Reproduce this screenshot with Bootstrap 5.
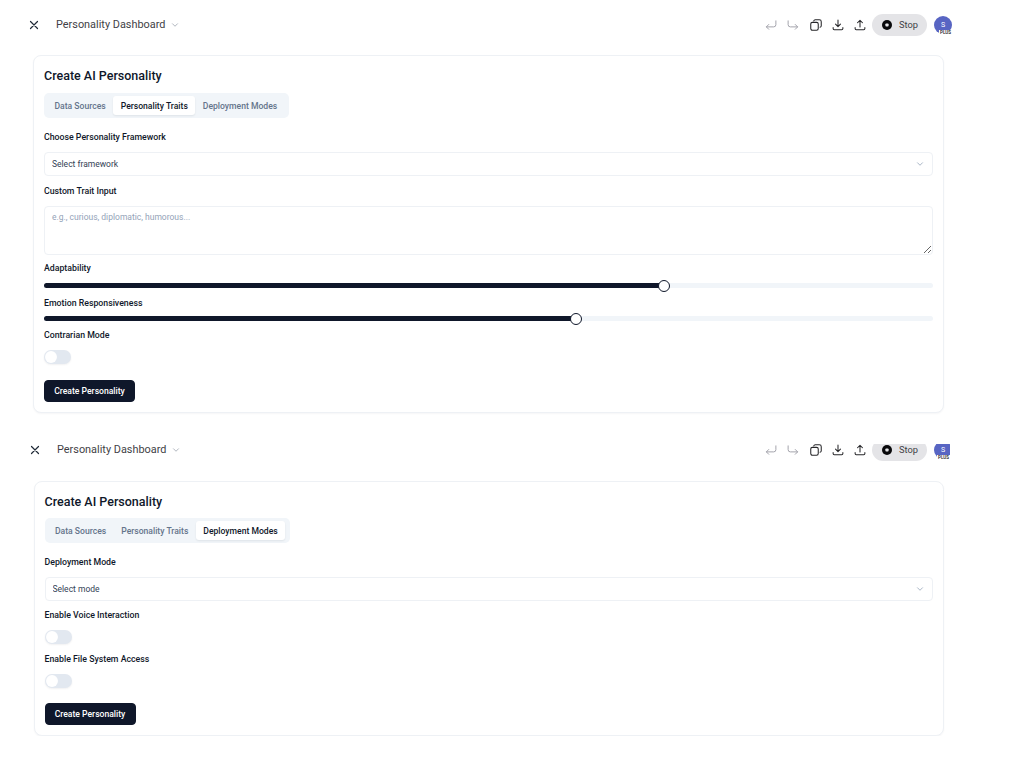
<!DOCTYPE html>
<html lang="en">
  <head>
    <meta charset="UTF-8" />
    <meta name="viewport" content="width=device-width, initial-scale=1.0" />
    <title>Personality Dashboard</title>
    <link href="https://cdn.jsdelivr.net/npm/bootstrap@5.3.3/dist/css/bootstrap.min.css" rel="stylesheet" />
    <style>
      body {
        font-family: Roboto, "Liberation Sans", sans-serif;
        background-color: #fff;
        color: #0f172a;
        padding-top: 14px;
      }
      .sheet {
        width: 952px;
      }
      .sheet-second {
        width: 950px;
        margin-top: 26px;
      }
      .page-head {
        height: 22px;
        padding-left: 29px;
      }
      .sheet-second .page-head {
        padding-left: 30px;
      }
      .close-icon {
        width: 10px;
        height: 10px;
        margin-right: 17px;
        color: #1f2937;
      }
      .page-name {
        font-size: 10.9px;
        color: #3f3f46;
      }
      .name-chevron {
        width: 8px;
        height: 8px;
        margin-left: 6px;
        color: #9ca3af;
      }
      .head-tools {
        width: 192px;
        height: 22px;
        overflow: hidden;
      }
      .sheet-second .head-tools {
        width: 190px;
        height: 17px;
        align-self: flex-end;
      }
      .tool-slot {
        flex: none;
        width: 22px;
        height: 22px;
        color: #27272a;
      }
      .tool-slot svg {
        width: 12px;
        height: 12px;
      }
      .tool-gap {
        margin-left: 1px;
      }
      .tool-muted {
        color: #a1a1aa;
      }
      .stop-pill {
        flex: none;
        width: 55px;
        height: 22px;
        margin-left: 1px;
        background-color: #e4e4e7;
        border-radius: 11px;
        font-size: 9.3px;
        color: #3f3f46;
      }
      .stop-dot {
        width: 10px;
        height: 10px;
        margin-left: 10px;
        margin-right: 7px;
      }
      .avatar-slot {
        flex: none;
        width: 18px;
        height: 22px;
        margin-left: 7px;
      }
      .avatar-disc {
        top: 2px;
        left: 0;
        width: 18px;
        height: 18px;
        background-color: #5865c3;
        color: #fff;
        font-size: 7px;
      }
      .plus-tag {
        top: 16px;
        right: 0;
        padding: 0 1px;
        background-color: #fff;
        font-size: 4.5px;
        line-height: 5px;
        font-weight: 600;
        color: #27272a;
      }
      .sheet-second .plus-tag {
        right: 2px;
      }
      .maker-card {
        width: 911px;
        margin-top: 19px;
        margin-left: 33px;
        padding: 10px;
        border: 1px solid #eef1f5;
        border-radius: 8px;
        box-shadow: 0 1px 2px rgba(15, 23, 42, 0.04);
        color: #0f172a;
      }
      .sheet-first .maker-card {
        height: 358px;
      }
      .sheet-second .maker-card {
        height: 255px;
        margin-top: 20px;
        margin-left: 33.5px;
        width: 910.5px;
      }
      .maker-title {
        font-size: 12.5px;
        font-weight: 500;
        line-height: 20px;
        margin-bottom: 7px;
      }
      .sheet-second .maker-title {
        margin-bottom: 6px;
      }
      .trait-tabs {
        width: 245px;
        height: 25px;
        padding: 3px;
        background-color: #f1f5f9;
        border-radius: 5px;
        flex-wrap: nowrap;
      }
      .trait-tabs .nav-link {
        flex: none;
        padding: 0 7.5px;
        height: 19px;
        line-height: 20px;
        border-radius: 3px;
        font-size: 8.6px;
        font-weight: 500;
        color: #64748b;
        white-space: nowrap;
      }
      .trait-tabs .nav-link.active {
        background-color: #fff;
        color: #0f172a;
        box-shadow: 0 1px 2px rgba(15, 23, 42, 0.08);
      }
      .field-name {
        display: block;
        margin: 0;
        font-size: 8.75px;
        font-weight: 500;
        line-height: 14px;
        color: #0f172a;
      }
      .pick-box {
        --bs-form-select-bg-img: url("data:image/svg+xml,%3csvg xmlns='http://www.w3.org/2000/svg' viewBox='0 0 16 16'%3e%3cpath fill='none' stroke='%2394a3b8' stroke-linecap='round' stroke-linejoin='round' stroke-width='1.6' d='M3 5.5l5 5 5-5'/%3e%3c/svg%3e");
        height: 25px;
        min-height: 0;
        padding: 0 24px 0 7px;
        border: 1px solid #eef1f5;
        border-radius: 4px;
        background-position: right 8px center;
        background-size: 8px 8px;
        font-size: 8.5px;
        line-height: 23px;
        color: #334155;
      }
      .trait-text {
        height: 50px;
        min-height: 0;
        padding: 4px 7px;
        border: 1px solid #eef1f5;
        border-radius: 4px;
        font-size: 8.5px;
        color: #334155;
      }
      .trait-text::placeholder {
        color: #94a3b8;
      }
      .level-wrap {
        height: 5px;
      }
      .level-bar {
        --bs-progress-height: 5px;
        --bs-progress-bg: #f1f5f9;
        --bs-progress-bar-bg: #0f172a;
        --bs-progress-border-radius: 3px;
      }
      .level-thumb {
        top: -3.5px;
        width: 12px;
        height: 12px;
        margin-left: -6px;
        background-color: #fff;
        border: 1.75px solid #0f172a;
        border-radius: 50%;
      }
      .soft-switch {
        min-height: 0;
        margin: 0;
        padding: 0;
        line-height: 0;
      }
      .soft-switch .form-check-input {
        --bs-form-switch-bg: url("data:image/svg+xml,%3csvg xmlns='http://www.w3.org/2000/svg' viewBox='-4 -4 8 8'%3e%3ccircle r='3.4' fill='%23fff'/%3e%3c/svg%3e");
        float: none;
        width: 27px;
        height: 14px;
        margin: 0;
        border: 0;
        background-color: #e2e8f0;
        box-shadow: 0 1px 2px rgba(15, 23, 42, 0.06);
      }
      .make-btn {
        width: 91px;
        height: 22px;
        padding: 1px 0 0;
        background-color: #0f172a;
        border-color: #0f172a;
        border-radius: 4px;
        font-size: 8.6px;
        font-weight: 500;
      }
      .gap-after-tabs { margin-top: 12px; }
      .gap-small { margin-top: 8px; }
      .gap-label { margin-top: 8px; }
      .gap-area { margin-top: 8px; }
      .gap-after-text { margin-top: 6.5px; }
      .gap-bar { margin-top: 8px; }
      .gap-bar-tight { margin-top: 6.5px; }
      .gap-next-label { margin-top: 7.5px; }
      .gap-last-label { margin-top: 6.5px; }
      .gap-switch { margin-top: 8px; }
      .gap-button { margin-top: 15px; }
      .sheet-second .gap-label { margin-top: 7px; }
      .sheet-second .gap-next-label { margin-top: 9px; }
      .sheet-second .gap-button { margin-top: 14px; }
    </style>
  </head>
  <body>
    <svg width="0" height="0" class="position-absolute">
      <symbol id="ico-close" viewBox="0 0 10 10"><path d="M1.5 1.5l7 7M8.5 1.5l-7 7" fill="none" stroke="currentColor" stroke-width="1.2" stroke-linecap="round" /></symbol>
      <symbol id="ico-chevron" viewBox="0 0 16 16"><path d="M3 5.5l5 5 5-5" fill="none" stroke="currentColor" stroke-width="1.6" stroke-linecap="round" stroke-linejoin="round" /></symbol>
      <symbol id="ico-undo" viewBox="0 0 16 16"><path d="M14.5 2.5v5a3 3 0 0 1-3 3H2M5 7.3L1.8 10.5 5 13.7" fill="none" stroke="currentColor" stroke-width="1.3" stroke-linecap="round" stroke-linejoin="round" /></symbol>
      <symbol id="ico-redo" viewBox="0 0 16 16"><path d="M1.5 2.5v5a3 3 0 0 0 3 3H14M11 7.3l3.2 3.2-3.2 3.2" fill="none" stroke="currentColor" stroke-width="1.3" stroke-linecap="round" stroke-linejoin="round" /></symbol>
      <symbol id="ico-copy" viewBox="0 0 16 16"><g fill="none" stroke="currentColor" stroke-width="1.4"><rect x="1" y="4.5" width="10" height="10.5" rx="2.2" /><path d="M5 2.6C5.3 1.6 6 1 7 1h5.5C14 1 15 2 15 3.5V9c0 1-.6 1.8-1.6 2" stroke-linecap="round" /></g></symbol>
      <symbol id="ico-down" viewBox="0 0 16 16"><path d="M8 1.5v8.5M4.7 6.8L8 10.1l3.3-3.3M1.5 11.5v1.3c0 .9.6 1.5 1.5 1.5h10c.9 0 1.5-.6 1.5-1.5v-1.3" fill="none" stroke="currentColor" stroke-width="1.4" stroke-linecap="round" stroke-linejoin="round" /></symbol>
      <symbol id="ico-up" viewBox="0 0 16 16"><path d="M8 10.5V1.8M4.7 5L8 1.7 11.3 5M1.5 11.5v1.3c0 .9.6 1.5 1.5 1.5h10c.9 0 1.5-.6 1.5-1.5v-1.3" fill="none" stroke="currentColor" stroke-width="1.4" stroke-linecap="round" stroke-linejoin="round" /></symbol>
      <symbol id="ico-stop" viewBox="0 0 10 10"><circle cx="5" cy="5" r="5" fill="#09090b" /><rect x="3.4" y="3.4" width="3.2" height="3.2" rx=".8" fill="#e4e4e7" /></symbol>
    </svg>

    <section class="sheet sheet-first">
      <div class="page-head d-flex align-items-center">
        <svg class="close-icon"><use href="#ico-close" /></svg>
        <span class="page-name">Personality Dashboard</span>
        <svg class="name-chevron"><use href="#ico-chevron" /></svg>
        <div class="head-tools d-flex align-items-end ms-auto">
          <span class="tool-slot tool-muted d-flex align-items-center justify-content-center"><svg><use href="#ico-undo" /></svg></span>
          <span class="tool-slot tool-muted d-flex align-items-center justify-content-center"><svg><use href="#ico-redo" /></svg></span>
          <span class="tool-slot tool-gap d-flex align-items-center justify-content-center"><svg><use href="#ico-copy" /></svg></span>
          <span class="tool-slot d-flex align-items-center justify-content-center"><svg><use href="#ico-down" /></svg></span>
          <span class="tool-slot d-flex align-items-center justify-content-center"><svg><use href="#ico-up" /></svg></span>
          <span class="stop-pill d-flex align-items-center"><svg class="stop-dot"><use href="#ico-stop" /></svg>Stop</span>
          <span class="avatar-slot position-relative">
            <span class="avatar-disc position-absolute rounded-circle d-flex align-items-center justify-content-center">S</span>
            <span class="plus-tag position-absolute">PLUS</span>
          </span>
        </div>
      </div>

      <div class="card maker-card">
        <h2 class="maker-title">Create AI Personality</h2>
        <ul class="nav trait-tabs">
          <li class="nav-item"><a class="nav-link" href="#">Data Sources</a></li>
          <li class="nav-item"><a class="nav-link active" href="#">Personality Traits</a></li>
          <li class="nav-item"><a class="nav-link" href="#">Deployment Modes</a></li>
        </ul>
        <label class="field-name gap-after-tabs">Choose Personality Framework</label>
        <select class="form-select pick-box gap-small"><option>Select framework</option></select>
        <label class="field-name gap-label">Custom Trait Input</label>
        <textarea class="form-control trait-text gap-area" placeholder="e.g., curious, diplomatic, humorous..."></textarea>
        <label class="field-name gap-after-text">Adaptability</label>
        <div class="level-wrap position-relative gap-bar">
          <div class="progress level-bar"><div class="progress-bar" style="width: 69.7%"></div></div>
          <span class="level-thumb position-absolute" style="left: 69.7%"></span>
        </div>
        <label class="field-name gap-next-label">Emotion Responsiveness</label>
        <div class="level-wrap position-relative gap-bar-tight">
          <div class="progress level-bar"><div class="progress-bar" style="width: 59.8%"></div></div>
          <span class="level-thumb position-absolute" style="left: 59.8%"></span>
        </div>
        <label class="field-name gap-last-label">Contrarian Mode</label>
        <div class="form-check form-switch soft-switch gap-switch"><input class="form-check-input" type="checkbox" role="switch" /></div>
        <div class="gap-button"><button class="btn btn-dark make-btn" type="button">Create Personality</button></div>
      </div>
    </section>

    <section class="sheet sheet-second">
      <div class="page-head d-flex align-items-center">
        <svg class="close-icon"><use href="#ico-close" /></svg>
        <span class="page-name">Personality Dashboard</span>
        <svg class="name-chevron"><use href="#ico-chevron" /></svg>
        <div class="head-tools d-flex align-items-end ms-auto">
          <span class="tool-slot tool-muted d-flex align-items-center justify-content-center"><svg><use href="#ico-undo" /></svg></span>
          <span class="tool-slot tool-muted d-flex align-items-center justify-content-center"><svg><use href="#ico-redo" /></svg></span>
          <span class="tool-slot tool-gap d-flex align-items-center justify-content-center"><svg><use href="#ico-copy" /></svg></span>
          <span class="tool-slot d-flex align-items-center justify-content-center"><svg><use href="#ico-down" /></svg></span>
          <span class="tool-slot d-flex align-items-center justify-content-center"><svg><use href="#ico-up" /></svg></span>
          <span class="stop-pill d-flex align-items-center"><svg class="stop-dot"><use href="#ico-stop" /></svg>Stop</span>
          <span class="avatar-slot position-relative">
            <span class="avatar-disc position-absolute rounded-circle d-flex align-items-center justify-content-center">S</span>
            <span class="plus-tag position-absolute">PLUS</span>
          </span>
        </div>
      </div>

      <div class="card maker-card">
        <h2 class="maker-title">Create AI Personality</h2>
        <ul class="nav trait-tabs">
          <li class="nav-item"><a class="nav-link" href="#">Data Sources</a></li>
          <li class="nav-item"><a class="nav-link" href="#">Personality Traits</a></li>
          <li class="nav-item"><a class="nav-link active" href="#">Deployment Modes</a></li>
        </ul>
        <label class="field-name gap-after-tabs">Deployment Mode</label>
        <select class="form-select pick-box gap-small"><option>Select mode</option></select>
        <label class="field-name gap-label">Enable Voice Interaction</label>
        <div class="form-check form-switch soft-switch gap-switch"><input class="form-check-input" type="checkbox" role="switch" /></div>
        <label class="field-name gap-next-label">Enable File System Access</label>
        <div class="form-check form-switch soft-switch gap-switch"><input class="form-check-input" type="checkbox" role="switch" /></div>
        <div class="gap-button"><button class="btn btn-dark make-btn" type="button">Create Personality</button></div>
      </div>
    </section>

    <script src="https://cdn.jsdelivr.net/npm/bootstrap@5.3.3/dist/js/bootstrap.bundle.min.js"></script>
  </body>
</html>
